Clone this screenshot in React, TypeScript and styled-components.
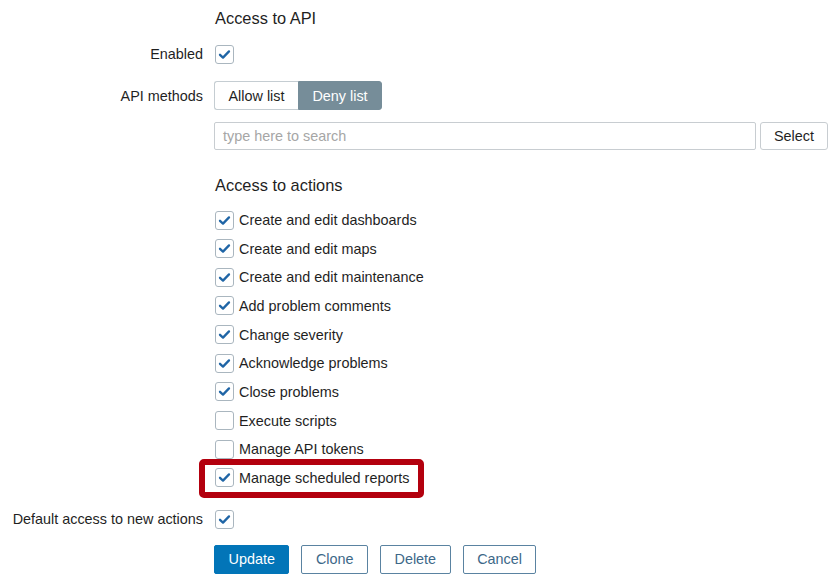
import React from "react";
import styled, { createGlobalStyle } from "styled-components";

const GlobalStyle = createGlobalStyle`
  html, body {
    margin: 0;
    padding: 0;
    background: #ffffff;
  }
  body {
    font-family: "Liberation Sans", Arial, sans-serif;
    font-size: 14.4px;
    color: #1f1f1f;
    overflow: hidden;
  }
`;

const actions: { label: string; checked: boolean; highlight?: boolean }[] = [
  { label: "Create and edit dashboards", checked: true },
  { label: "Create and edit maps", checked: true },
  { label: "Create and edit maintenance", checked: true },
  { label: "Add problem comments", checked: true },
  { label: "Change severity", checked: true },
  { label: "Acknowledge problems", checked: true },
  { label: "Close problems", checked: true },
  { label: "Execute scripts", checked: false },
  { label: "Manage API tokens", checked: false },
  { label: "Manage scheduled reports", checked: true, highlight: true },
];

const Page = styled.div`
  width: 840px;
  height: 574px;
  overflow: hidden;
`;

const Row = styled.div<{ $top?: number; $height: number }>`
  display: grid;
  grid-template-columns: 203px 1fr;
  column-gap: 12px;
  align-items: center;
  margin-top: ${({ $top }) => $top ?? 0}px;
  height: ${({ $height }) => $height}px;
`;

const Label = styled.div`
  text-align: right;
  white-space: nowrap;
  color: #1f1f1f;
`;

const Heading = styled.div`
  font-size: 16.4px;
  color: #1f1f1f;
`;

const CheckBox = styled.span`
  display: inline-flex;
  align-items: center;
  justify-content: center;
  width: 17px;
  height: 17px;
  border: 1px solid #aab6bf;
  border-radius: 3px;
  background: #ffffff;
  flex-shrink: 0;
`;

const Check = ({ checked }: { checked: boolean }) => (
  <CheckBox>
    {checked && (
      <svg width="13" height="13" viewBox="0 0 13 13">
        <polyline
          points="2,6.8 5,9.6 11,3.4"
          fill="none"
          stroke="#1f65a6"
          strokeWidth="2.3"
          strokeLinecap="round"
          strokeLinejoin="round"
        />
      </svg>
    )}
  </CheckBox>
);

const Segmented = styled.div`
  display: inline-flex;
  height: 29px;
  margin-left: -1px;
`;

const Segment = styled.span<{ $active?: boolean }>`
  display: inline-flex;
  align-items: center;
  justify-content: center;
  width: 84px;
  box-sizing: border-box;
  border: 1px solid ${({ $active }) => ($active ? "#768d99" : "#c5cdd2")};
  background: ${({ $active }) => ($active ? "#768d99" : "#ffffff")};
  color: ${({ $active }) => ($active ? "#ffffff" : "#1f1f1f")};

  &:first-child {
    border-radius: 3px 0 0 3px;
    border-right: none;
  }
  &:last-child {
    border-radius: 0 3px 3px 0;
  }
`;

const SearchLine = styled.div`
  display: flex;
  gap: 4px;
  height: 28px;
  margin-left: -1px;
`;

const SearchInput = styled.div`
  width: 542px;
  box-sizing: border-box;
  border: 1px solid #c8cdd1;
  border-radius: 2px;
  display: flex;
  align-items: center;
  padding: 0 8px;
  color: #a6a6a6;
`;

const SelectButton = styled.span`
  width: 68px;
  box-sizing: border-box;
  border: 1px solid #c8cdd1;
  border-radius: 3px;
  display: inline-flex;
  align-items: center;
  justify-content: center;
  color: #1f1f1f;
`;

const ActionList = styled.div`
  margin-top: 7.7px;
`;

const ActionRow = styled.div`
  display: grid;
  grid-template-columns: 203px 1fr;
  column-gap: 12px;
  height: 28.66px;
  align-items: center;
`;

const ActionItem = styled.div`
  grid-column: 2;
  position: relative;
  display: flex;
  align-items: center;
  gap: 5px;
  white-space: nowrap;
`;

const Highlight = styled.span`
  position: absolute;
  left: -16px;
  top: 50%;
  margin-top: -19px;
  width: 225px;
  height: 39px;
  box-sizing: border-box;
  border: 6px solid #b3000e;
  border-radius: 5px;
  pointer-events: none;
`;

const Buttons = styled.div`
  grid-column: 2;
  display: flex;
  gap: 12px;
  margin-left: -1px;
`;

const Button = styled.span<{ $primary?: boolean }>`
  display: inline-flex;
  align-items: center;
  height: 29px;
  box-sizing: border-box;
  padding: 0 13.5px;
  border-radius: 2px;
  border: 1px solid ${({ $primary }) => ($primary ? "#0275b8" : "#5a83a1")};
  background: ${({ $primary }) => ($primary ? "#0275b8" : "#ffffff")};
  color: ${({ $primary }) => ($primary ? "#ffffff" : "#3d6888")};
`;

const App: React.FC = () => {
  return (
    <Page>
      <GlobalStyle />
      <Row $height={36}>
        <span />
        <Heading>Access to API</Heading>
      </Row>
      <Row $height={36}>
        <Label>Enabled</Label>
        <div>
          <Check checked />
        </div>
      </Row>
      <Row $top={9} $height={29}>
        <Label>API methods</Label>
        <div>
          <Segmented>
            <Segment>Allow list</Segment>
            <Segment $active>Deny list</Segment>
          </Segmented>
        </div>
      </Row>
      <Row $top={12} $height={28}>
        <span />
        <SearchLine>
          <SearchInput>type here to search</SearchInput>
          <SelectButton>Select</SelectButton>
        </SearchLine>
      </Row>
      <Row $top={22} $height={26}>
        <span />
        <Heading>Access to actions</Heading>
      </Row>
      <ActionList>
        {actions.map((a) => (
          <ActionRow key={a.label}>
            <ActionItem>
              {a.highlight && <Highlight />}
              <Check checked={a.checked} />
              <span>{a.label}</span>
            </ActionItem>
          </ActionRow>
        ))}
      </ActionList>
      <Row $top={12.4} $height={29}>
        <Label>Default access to new actions</Label>
        <div>
          <Check checked />
        </div>
      </Row>
      <Row $top={11.3} $height={29}>
        <span />
        <Buttons>
          <Button $primary>Update</Button>
          <Button>Clone</Button>
          <Button>Delete</Button>
          <Button>Cancel</Button>
        </Buttons>
      </Row>
    </Page>
  );
};

export default App;
